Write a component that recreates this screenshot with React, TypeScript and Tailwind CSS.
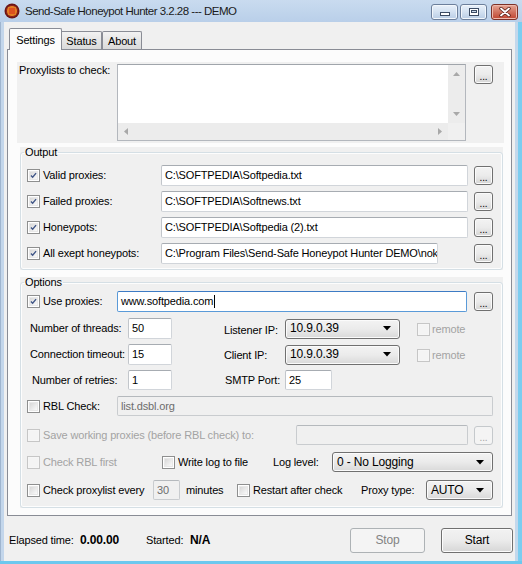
import React from "react";

const F = "font-['Liberation_Sans',Arial,sans-serif]";

function Check({ checked = false, disabled = false }: { checked?: boolean; disabled?: boolean }) {
  return (
    <div
      className={`w-[13px] h-[13px] shrink-0 border p-[1px] ${
        disabled ? "border-[#c6c6c6] bg-[#f6f6f6]" : "border-[#8e8f8f] bg-white"
      }`}
    >
      <div
        className={`w-full h-full flex items-center justify-center ${
          disabled ? "bg-[#f4f4f4]" : "bg-linear-to-br from-[#d8d8d8] to-[#fafafa] border border-[#e8e8e8]"
        }`}
      >
        {checked && (
          <svg width="9" height="9" viewBox="0 0 9 9">
            <path d="M1.2 4.6 L3.4 6.8 L7.8 1.4" fill="none" stroke="#3e5486" strokeWidth="1.7" />
          </svg>
        )}
      </div>
    </div>
  );
}

function Input({
  value = "",
  w,
  h = 21,
  disabled = false,
  focused = false,
  caret = false,
}: {
  value?: string;
  w: number;
  h?: number;
  disabled?: boolean;
  focused?: boolean;
  caret?: boolean;
}) {
  const border = focused
    ? "border-[#5a9ad8] border-t-[#3d7bc4]"
    : disabled
    ? "border-[#c9cccf] border-t-[#b5b9bd]"
    : "border-[#d1d5da] border-t-[#a7acb2] border-l-[#c2c6cb]";
  return (
    <div
      style={{ width: w, height: h }}
      className={`shrink-0 border rounded-[2px] flex items-center pl-[3px] whitespace-nowrap overflow-hidden ${border} ${
        disabled ? "bg-[#f0f0f0] text-[#6d6d6d]" : "bg-white text-black"
      }`}
    >
      <span>{value}</span>
      {caret && <span className="inline-block w-[1px] h-[13px] bg-black ml-[1px]" />}
    </div>
  );
}

function Dots({ disabled = false, h = 19 }: { disabled?: boolean; h?: number }) {
  return (
    <div
      style={{ height: h }}
      className={`w-[19px] shrink-0 rounded-[3px] border flex items-end justify-center pb-[2px] leading-[8px] ${
        disabled
          ? "border-[#c5c9cc] bg-[#f4f4f4] text-[#a3a3a3]"
          : "border-[#707070] bg-linear-to-b from-[#f3f3f3] via-[#ebebeb] to-[#d5d5d5] text-black shadow-[inset_0_0_0_1px_#fbfbfb]"
      }`}
    >
      <span className="text-[10px]">...</span>
    </div>
  );
}

function Select({ value, w, h = 21 }: { value: string; w: number; h?: number }) {
  return (
    <div
      style={{ width: w, height: h }}
      className="shrink-0 rounded-[3px] border border-[#707070] bg-linear-to-b from-[#f3f3f3] via-[#ebebeb] to-[#d9d9d9] shadow-[inset_0_0_0_1px_#fbfbfb] flex items-center pl-[4px] pr-[8px] text-[12px]"
    >
      <span className="flex-1 whitespace-nowrap">{value}</span>
      <svg width="8" height="5" viewBox="0 0 8 5">
        <path d="M0 0 H8 L4 4.5 Z" fill="#000" />
      </svg>
    </div>
  );
}

function Label({ w, children, disabled = false, className = "" }: { w?: number; children: React.ReactNode; disabled?: boolean; className?: string }) {
  return (
    <div
      style={w !== undefined ? { width: w } : undefined}
      className={`shrink-0 whitespace-nowrap ${disabled ? "text-[#a3a3a3]" : "text-black"} ${className}`}
    >
      {children}
    </div>
  );
}

function Arrow({ dir }: { dir: "up" | "down" | "left" | "right" }) {
  const d =
    dir === "up"
      ? "M0 4 L3.5 0 L7 4 Z"
      : dir === "down"
      ? "M0 0 L7 0 L3.5 4 Z"
      : dir === "left"
      ? "M4 0 L4 7 L0 3.5 Z"
      : "M0 0 L4 3.5 L0 7 Z";
  const vert = dir === "up" || dir === "down";
  return (
    <svg width={vert ? 7 : 4} height={vert ? 4 : 7} viewBox={vert ? "0 0 7 4" : "0 0 4 7"}>
      <path d={d} fill="#a8a8a8" />
    </svg>
  );
}

function GroupBox({ title, children, className = "" }: { title: string; children: React.ReactNode; className?: string }) {
  return (
    <div className={`bg-[#f0f0f0] ${className}`}>
      <fieldset className="border border-[#d5dfe5] rounded-[3px] shadow-[inset_0_0_0_1px_#fdfdfd] m-0 px-0">
        <legend className="ml-[3px] px-[1px] leading-[11px] text-black">{title}</legend>
        {children}
      </fieldset>
    </div>
  );
}

function WinBtn({ kind }: { kind: "min" | "max" | "close" }) {
  if (kind === "close") {
    return (
      <div className="w-[27px] h-[16px] rounded-[3px] border border-[#7d3128] bg-linear-to-b from-[#e6a596] via-[#d1725f] to-[#c0432f] flex items-center justify-center shadow-[inset_0_0_0_1px_#eeb9ad]">
        <svg width="12" height="10" viewBox="0 0 12 10">
          <path d="M2 1.5 L10 8.5 M10 1.5 L2 8.5" stroke="#5a1f18" strokeWidth="3.4" strokeLinecap="round" />
          <path d="M2 1.5 L10 8.5 M10 1.5 L2 8.5" stroke="#ffffff" strokeWidth="1.8" strokeLinecap="round" />
        </svg>
      </div>
    );
  }
  return (
    <div className="w-[27px] h-[16px] rounded-[3px] border border-[#6c7f9b] bg-linear-to-b from-[#e9f1fa] via-[#d3e1f1] to-[#b9cde5] flex items-center justify-center shadow-[inset_0_0_0_1px_#f2f7fc]">
      {kind === "min" ? (
        <div className="w-[10px] h-[4px] mt-[5px] border border-[#3b4b63] bg-white" />
      ) : (
        <div className="w-[10px] h-[8px] border border-[#3b4b63] bg-white flex items-center justify-center">
          <div className="w-[6px] h-[3px] border border-[#3b4b63] bg-[#c9d8ea]" />
        </div>
      )}
    </div>
  );
}

export default function App() {
  return (
    <div className={`w-[522px] h-[564px] flex flex-col overflow-hidden bg-[#c0d4ea] text-[11px] leading-[13px] tracking-[-0.15px] text-black ${F} relative`}>
      {/* Title bar */}
      <div className="h-[22px] shrink-0 flex items-center bg-linear-to-b from-[#c9dbef] to-[#b9cfe9]">
        <svg width="16" height="16" viewBox="0 0 16 16" className="ml-[4px] mt-[-1px]">
          <circle cx="8" cy="8" r="7.5" fill="#6b1616" />
          <circle cx="8" cy="8" r="5.6" fill="#f4d22a" />
          <path d="M3 6 H13 M3 8 H13 M3 10 H13 M6 3 V13 M8 3 V13 M10 3 V13" stroke="#d4281e" strokeWidth="1" />
          <circle cx="8" cy="8" r="5.6" fill="none" stroke="#8c1f1a" strokeWidth="1" />
        </svg>
        <div className="ml-[5px] text-[11.5px] leading-[16px] text-[#1a1a1a] tracking-[-0.5px]">Send-Safe Honeypot Hunter 3.2.28 --- DEMO</div>
        <div className="ml-auto mr-[4px] flex items-center mt-[1px]">
          <WinBtn kind="min" />
          <div className="w-[2px]" />
          <WinBtn kind="max" />
          <div className="w-[4px]" />
          <WinBtn kind="close" />
        </div>
      </div>

      {/* body */}
      <div className="flex flex-1 min-h-0">
        <div className="w-[4px] shrink-0 flex">
          <div className="w-[1px] bg-[#9fb5cf]" />
          <div className="w-[3px] bg-[#c3d6eb]" />
        </div>

        {/* client */}
        <div className="w-[511px] shrink-0 bg-[#f0f0f0] flex flex-col">
          {/* tabs */}
          <div className="mt-[6px] ml-[5px] h-[21px] flex items-end relative z-10">
            <div className="w-[53px] h-[22px] -mb-[1px] border border-b-0 border-[#898c95] bg-[#fcfcfc] rounded-t-[2px] flex justify-center pt-[5px]">
              Settings
            </div>
            <div className="w-[40px] h-[18px] border border-b-0 border-l-0 border-[#898c95] bg-linear-to-b from-[#f2f2f2] to-[#dadada] rounded-tr-[2px] flex justify-center pt-[3px]">
              Status
            </div>
            <div className="w-[40px] h-[18px] border border-b-0 border-[#898c95] bg-linear-to-b from-[#f2f2f2] to-[#dadada] rounded-t-[2px] flex justify-center pt-[3px]">
              About
            </div>
          </div>

          {/* panel */}
          <div className="ml-[3px] w-[505px] h-[467px] border border-[#898c95] bg-[#fcfcfc] flex flex-col">
            {/* proxylists */}
            <div className="mt-[12px] ml-[9px] w-[487px] h-[81px] bg-[#f0f0f0] flex items-start">
              <Label w={98} className="ml-[2px] mt-[2px]">Proxylists to check:</Label>
              <div className="mt-[2px] w-[349px] h-[77px] border border-[#b3b7bd] border-t-[#a0a5ab] bg-white flex flex-col">
                <div className="flex flex-1 min-h-0">
                  <div className="flex-1" />
                  <div className="w-[17px] bg-[#ececec] flex flex-col items-center justify-between py-[7px]">
                    <Arrow dir="up" />
                    <Arrow dir="down" />
                  </div>
                </div>
                <div className="h-[17px] flex">
                  <div className="flex-1 bg-[#ececec] flex items-center justify-between px-[6px]">
                    <Arrow dir="left" />
                    <Arrow dir="right" />
                  </div>
                  <div className="w-[17px] bg-[#f0f0f0]" />
                </div>
              </div>
              <div className="ml-[8px] mt-[3px]">
                <Dots />
              </div>
            </div>

            {/* Output */}
            <GroupBox title="Output" className="mt-[4px] ml-[12px] w-[483px]">
              <div className="pt-[7px] pb-[5px] flex flex-col gap-[5px]">
                {[
                  ["Valid proxies:", "C:\\SOFTPEDIA\\Softpedia.txt", 307],
                  ["Failed proxies:", "C:\\SOFTPEDIA\\Softnews.txt", 307],
                  ["Honeypots:", "C:\\SOFTPEDIA\\Softpedia (2).txt", 307],
                  ["All exept honeypots:", "C:\\Program Files\\Send-Safe Honeypot Hunter DEMO\\nok", 277],
                ].map(([label, val, w]) => (
                  <div key={label as string} className="h-[21px] flex items-center pl-[6px]">
                    <Check checked />
                    <Label w={118} className="ml-[3px]">{label as string}</Label>
                    <Input value={val as string} w={w as number} />
                    <div style={{ marginLeft: (w as number) === 307 ? 6 : 36 }}>
                      <Dots />
                    </div>
                  </div>
                ))}
              </div>
            </GroupBox>

            {/* Options */}
            <GroupBox title="Options" className="mt-[7px] ml-[12px] w-[483px]">
              <div className="pt-[3px] pb-[7px] flex flex-col">
                {/* row1 */}
                <div className="h-[21px] flex items-center pl-[6px]">
                  <Check checked />
                  <Label w={74} className="ml-[3px]">Use proxies:</Label>
                  <Input value="www.softpedia.com" w={350} focused caret />
                  <div className="ml-[7px]">
                    <Dots />
                  </div>
                </div>
                {/* row2 */}
                <div className="mt-[6px] h-[21px] flex items-center pl-[9px]">
                  <Label w={98}>Number of threads:</Label>
                  <Input value="50" w={44} />
                  <Label w={61} className="ml-[52px] mt-[4px]">Listener IP:</Label>
                  <Select value="10.9.0.39" w={115} h={20} />
                  <div className="ml-[17px] mt-[2px]">
                    <Check disabled />
                  </div>
                  <Label disabled className="ml-[2px] mt-[2px]">remote</Label>
                </div>
                {/* row3 */}
                <div className="mt-[5px] h-[21px] flex items-center pl-[9px]">
                  <Label w={98}>Connection timeout:</Label>
                  <Input value="15" w={44} />
                  <Label w={61} className="ml-[52px] mt-[2px]">Client IP:</Label>
                  <Select value="10.9.0.39" w={115} h={20} />
                  <div className="ml-[17px] mt-[2px]">
                    <Check disabled />
                  </div>
                  <Label disabled className="ml-[2px] mt-[2px]">remote</Label>
                </div>
                {/* row4 */}
                <div className="mt-[5px] h-[20px] flex items-center pl-[11px]">
                  <Label w={96}>Number of retries:</Label>
                  <Input value="1" w={44} h={20} />
                  <Label w={60} className="ml-[53px]">SMTP Port:</Label>
                  <Input value="25" w={47} h={20} />
                </div>
                {/* row5 */}
                <div className="mt-[6px] h-[20px] flex items-center pl-[6px]">
                  <Check />
                  <Label w={74} className="ml-[3px]">RBL Check:</Label>
                  <Input value="list.dsbl.org" w={376} h={20} disabled />
                </div>
                {/* row6 */}
                <div className="mt-[9px] h-[20px] flex items-center pl-[6px]">
                  <Check disabled />
                  <Label w={253} disabled className="ml-[3px]">Save working proxies (before RBL check) to:</Label>
                  <Input w={172} h={20} disabled />
                  <div className="ml-[6px]">
                    <Dots disabled h={19} />
                  </div>
                </div>
                {/* row7 */}
                <div className="mt-[7px] h-[20px] flex items-center pl-[6px]">
                  <Check disabled />
                  <Label w={119} disabled className="ml-[3px]">Check RBL first</Label>
                  <Check />
                  <Label w={95} className="ml-[3px]">Write log to file</Label>
                  <Label w={59}>Log level:</Label>
                  <Select value="0 - No Logging" w={161} h={20} />
                </div>
                {/* row8 */}
                <div className="mt-[8px] h-[20px] flex items-center pl-[6px]">
                  <Check />
                  <Label w={110} className="ml-[3px]">Check proxylist every</Label>
                  <Input value="30" w={27} h={20} disabled />
                  <Label w={51} className="ml-[6px]">minutes</Label>
                  <Check />
                  <Label w={108} className="ml-[3px]">Restart after check</Label>
                  <Label w={65}>Proxy type:</Label>
                  <Select value="AUTO" w={67} h={20} />
                </div>
              </div>
            </GroupBox>
          </div>

          {/* bottom status */}
          <div className="mt-[12px] h-[25px] flex items-center pl-[5px] pr-[2px]">
            <Label w={71}>Elapsed time:</Label>
            <div className="w-[66px] font-bold text-[12px]">0.00.00</div>
            <Label w={44}>Started:</Label>
            <div className="font-bold text-[12px]">N/A</div>
            <div className="ml-auto flex items-center">
              <div className="w-[75px] h-[25px] rounded-[3px] border border-[#adb2b5] bg-[#f4f4f4] text-[#838383] flex items-center justify-center text-[12px]">
                Stop
              </div>
              <div className="ml-[16px] w-[72px] h-[25px] rounded-[3px] border border-[#707070] bg-linear-to-b from-[#f2f2f2] via-[#ebebeb] to-[#d6d6d6] shadow-[inset_0_0_0_1px_#fcfcfc] flex items-center justify-center text-[12px]">
                Start
              </div>
            </div>
          </div>
        </div>

        <div className="flex-1 flex">
          <div className="w-[3px] bg-[#c3d8ec]" />
          <div className="flex-1 bg-[#7ccdf0]" />
        </div>
      </div>
      <div className="h-[3px] shrink-0 bg-[#6cc8ee]" />
    </div>
  );
}
